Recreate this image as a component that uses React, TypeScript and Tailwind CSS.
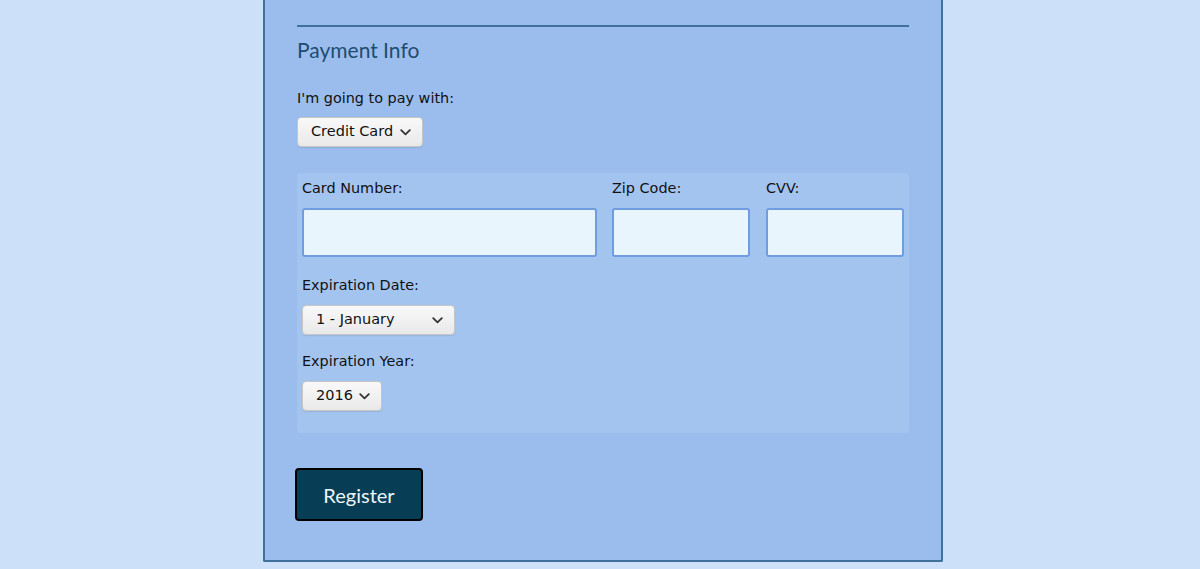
function Chevron() {
    return (
        <svg width="11" height="7" viewBox="0 0 11 7" className="shrink-0" fill="none">
            <path d="M1.2 1.2 L5.5 5.3 L9.8 1.2" stroke="#333" strokeWidth="1.8" strokeLinecap="round" strokeLinejoin="round" />
        </svg>
    );
}

function FakeSelect({ label, width }: { label: string; width: string }) {
    return (
        <div
            className={`${width} h-[30px] flex items-center justify-between gap-[4px] pl-[13px] pr-[11px] rounded-[4px] border border-[#c6c6c6] bg-gradient-to-b from-[#f9f9f9] to-[#e9e9e9] text-[14.5px] text-[#111] whitespace-nowrap shadow-[0_1px_1px_rgba(0,0,0,0.08)]`}
        >
            <span>{label}</span>
            <Chevron />
        </div>
    );
}

function Field({ label, width }: { label: string; width: string }) {
    return (
        <div className={`flex flex-col ${width}`}>
            <label className="text-[14.4px] leading-[20px] text-[#111] mb-[10px]">{label}</label>
            <div className="h-[49px] rounded-[3px] border-2 border-[#6f9de0] bg-[#e8f5fc]" />
        </div>
    );
}

export default function App() {
    return (
        <div className="min-h-[569px] bg-[#cce0fa] pl-[6px] font-['DejaVu_Sans',sans-serif]">
            <div className="mx-auto w-[680px] border-2 border-t-0 border-[#40709b] bg-[#9bbdee] px-[32px] pt-[25px] pb-[39px] rounded-b-[2px]">
                <hr className="border-0 h-[2px] bg-[#40709b]" />
                <h2 className="mt-[10px] text-[21px] leading-[26px] text-[#1e4d6f] font-['Lato',sans-serif]">
                    Payment Info
                </h2>

                <p className="mt-[25px] text-[14.4px] leading-[20px] text-[#111]">I'm going to pay with:</p>
                <div className="mt-[9px]">
                    <FakeSelect label="Credit Card" width="w-[126px]" />
                </div>

                <div className="mt-[26px] rounded-[4px] bg-[#a4c4f0] px-[5px] pt-[5px] pb-[22px]">
                    <div className="flex gap-[15px]">
                        <Field label="Card Number:" width="w-[295px]" />
                        <Field label="Zip Code:" width="w-[138px]" />
                        <Field label="CVV:" width="w-[138px] ml-[1px]" />
                    </div>

                    <p className="mt-[18px] text-[14.4px] leading-[20px] text-[#111]">Expiration Date:</p>
                    <div className="mt-[10px]">
                        <FakeSelect label="1 - January" width="w-[153px]" />
                    </div>

                    <p className="mt-[16px] text-[14.4px] leading-[20px] text-[#111]">Expiration Year:</p>
                    <div className="mt-[10px]">
                        <FakeSelect label="2016" width="w-[80px]" />
                    </div>
                </div>

                <button className="mt-[35px] -ml-[2px] w-[128px] h-[53px] rounded-[4px] border-2 border-black bg-[#073d55] text-[#eef6fb] text-[20px] font-['Lato',sans-serif]">
                    Register
                </button>
            </div>
        </div>
    );
}
